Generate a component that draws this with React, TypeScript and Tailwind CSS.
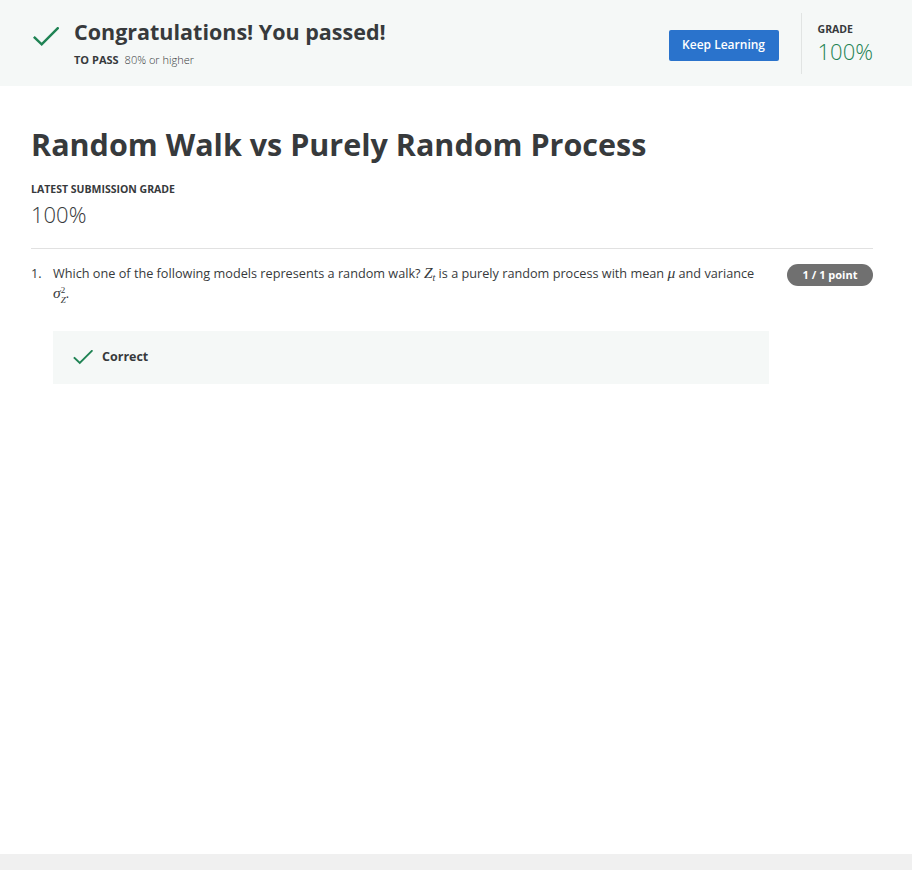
import React from "react";

const font = { fontFamily: '"Open Sans", "Liberation Sans", sans-serif' };
const mathFont = { fontFamily: '"Liberation Serif", "DejaVu Serif", serif' };

function Check({ className }: { className?: string }) {
  return (
    <svg viewBox="0 0 26 20" className={className} fill="none">
      <polyline points="1.7,10.7 8.7,17.3 24.7,1.3" stroke="#1f8354" strokeWidth="2.5" strokeLinecap="square" />
    </svg>
  );
}

function MathVar({ children }: { children: React.ReactNode }) {
  return <span className="italic text-[15.5px]" style={mathFont}>{children}</span>;
}

export default function App() {
  return (
    <div className="min-h-[870px] w-full bg-white flex flex-col text-[#373a3c]" style={font}>
      {/* Passed banner */}
      <div className="h-[86px] bg-[#f5f8f7] flex items-center justify-between pl-[33px] pr-[39px]">
        <div className="flex items-start self-start mt-[16px]">
          <Check className="w-[26px] h-[20px] mt-[11px]" />
          <div className="ml-[15px] flex flex-col">
            <h1 className="text-[21.5px] leading-8 font-bold">Congratulations! You passed!</h1>
            <div className="mt-[4px] leading-4 text-[11px] flex items-center">
              <span className="font-bold">TO PASS</span>
              <span className="ml-[6px] font-light">80% or higher</span>
            </div>
          </div>
        </div>
        <div className="flex items-center">
          <button className="w-[110px] h-[31px] mt-[4px] rounded-[2px] bg-[#2a73cc] text-white text-[12px] font-semibold">Keep Learning</button>
          <div className="ml-[22px] w-px h-[61px] bg-[#e1e4e3]" />
          <div className="ml-[16px] flex flex-col">
            <span className="text-[10.5px] leading-[12px] font-bold">GRADE</span>
            <span className="mt-[3px] text-[22px] leading-[26px] font-light text-[#1f8354]">100%</span>
          </div>
        </div>
      </div>

      {/* Main */}
      <div className="flex-1 pl-[31px] pr-[39px] pt-[40px]">
        <h2 className="text-[30.5px] leading-9 font-bold">Random Walk vs Purely Random Process</h2>
        <div className="mt-[19px] text-[10.5px] leading-4 font-bold">LATEST SUBMISSION GRADE</div>
        <div className="mt-[3px] text-[22px] leading-7 font-light">100%</div>
        <div className="mt-[20px] h-px bg-[#e1e1e1]" />

        <div className="mt-[14px] flex">
          <div className="w-[22px] text-[12.7px] leading-5">1.</div>
          <div className="flex-1">
            <p className="text-[12.7px] leading-5">
              Which one of the following models represents a random walk?{" "}
              <MathVar>
                Z<sub className="text-[10px]">t</sub>
              </MathVar>{" "}
              is a purely random process with mean <MathVar>μ</MathVar> and variance
              <br />
              <span className="whitespace-nowrap">
                <MathVar>σ</MathVar>
                <span className="inline-flex flex-col align-middle text-[9px] leading-[10px] italic" style={mathFont}>
                  <span className="not-italic">2</span>
                  <span>Z</span>
                </span>
                .
              </span>
            </p>
            <div className="mt-[26px] h-[53px] bg-[#f5f8f7] flex items-center pl-[20px]">
              <Check className="w-[20px] h-[15px]" />
              <span className="ml-[9px] text-[12.5px] font-bold">Correct</span>
            </div>
          </div>
          <div className="ml-[18px] mt-[1px] w-[86px] h-[22px] rounded-full bg-[#707070] text-white text-[11px] font-bold flex items-center justify-center">
            1 / 1 point
          </div>
        </div>
      </div>

      <div className="h-[16px] bg-[#f0f0f0]" />
    </div>
  );
}
